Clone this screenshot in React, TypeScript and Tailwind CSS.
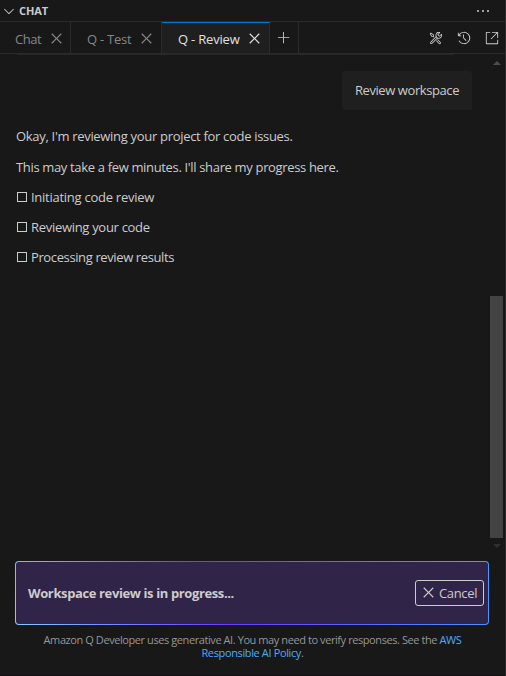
import React from "react";
import { VscAdd, VscChevronDown, VscClose, VscEllipsis, VscHistory, VscLinkExternal, VscTools } from "react-icons/vsc";

function Step({ label, tracking }: { label: string; tracking: string }) {
  return (
    <li className="flex h-[30px] items-center">
      <span className="mr-[4px] ml-[2px] h-[10px] w-[10px] shrink-0 border border-[#cccccc]" />
      <span className={tracking}>{label}</span>
    </li>
  );
}

export default function App() {
  return (
    <div className="flex h-[676px] w-[506px] flex-col overflow-hidden border-r border-[#2b2b2b] bg-[#181818] font-['Open_Sans','Noto_Sans',sans-serif] text-[13px] leading-[18px] whitespace-nowrap text-[#cccccc]">
      <header className="flex h-[22px] shrink-0 items-center border-b border-[#2b2b2b] pr-[14px] pl-[1px]">
        <VscChevronDown className="size-4" />
        <h1 className="ml-[2px] text-[11px] font-bold tracking-[-0.1px]">CHAT</h1>
        <VscEllipsis className="ml-auto size-4" />
      </header>

      <nav className="flex h-[32px] shrink-0 border-b border-[#2b2b2b] text-[#868686]">
        <div className="flex w-[71px] items-center border-r border-[#2b2b2b] pt-[3px] pl-[15px]">
          <span className="w-[32px] tracking-[-0.5px]">Chat</span>
          <VscClose className="size-[19px] -translate-y-px" />
        </div>
        <div className="flex w-[91px] items-center border-r border-[#2b2b2b] pt-[3px] pl-[16px]">
          <span className="w-[50px] tracking-[-0.25px]">Q - Test</span>
          <VscClose className="size-[19px] -translate-y-px" />
        </div>
        <div className="flex w-[108px] items-center border-t border-r border-t-[#0078d4] border-r-[#2b2b2b] bg-[#1f1f1f] pt-[2px] pl-[16px] text-[#e0e0e0]">
          <span className="w-[67px] tracking-[-0.2px]">Q - Review</span>
          <VscClose className="size-[19px] -translate-y-px" />
        </div>
        <div className="flex w-[29px] items-center justify-center border-r border-[#2b2b2b] text-[#cccccc]">
          <VscAdd className="size-[14px]" />
        </div>
        <div className="ml-auto flex items-center gap-[14px] pr-[6px] text-[#cccccc]">
          <VscTools className="size-[14px]" />
          <VscHistory className="size-[14px]" />
          <VscLinkExternal className="size-[14px]" />
        </div>
      </nav>

      <main className="flex h-[498px] shrink-0">
        <section className="min-w-0 flex-1 pl-[15px]">
          <div className="ml-[2px] h-px w-[437px] bg-[#272727]" />
          <div className="mt-[16px] ml-[327px] flex h-[39px] w-[130px] items-center justify-center rounded-[4px] rounded-br-none bg-[#1f1f1f] pb-[2px]">
            <span className="tracking-[-0.42px]">Review workspace</span>
          </div>
          <p className="mt-[17px] ml-px tracking-[-0.31px]">Okay, I'm reviewing your project for code issues.</p>
          <p className="mt-[13px] ml-px tracking-[-0.34px]">This may take a few minutes. I'll share my progress here.</p>
          <ul className="mt-[6px]">
            <Step label="Initiating code review" tracking="tracking-[-0.26px]" />
            <Step label="Reviewing your code" tracking="tracking-[-0.3px]" />
            <Step label="Processing review results" tracking="tracking-[-0.38px]" />
          </ul>
        </section>
        <div className="flex w-[17px] shrink-0 flex-col items-center pt-[7px]">
          <svg className="h-[4px] w-[8px] text-[#4c4c4c]" viewBox="0 0 8 4" fill="currentColor"><path d="M4 0 8 4H0Z" /></svg>
          <div className="mt-[231px] h-[242px] w-[13px] bg-[#434343]" />
          <svg className="mt-[6px] h-[4px] w-[8px] text-[#303030]" viewBox="0 0 8 4" fill="currentColor"><path d="M0 0H8L4 4Z" /></svg>
        </div>
      </main>

      <section className="mt-[9px] ml-[15px] h-[64px] w-[474px] shrink-0 rounded-[4px] bg-[linear-gradient(65deg,#83ccff_0%,#6b3cff_42%,#6650ff_55%,#4a9cff_100%)] p-px">
        <div className="flex h-full items-center justify-between rounded-[3px] bg-[#312449] pr-[4px] pl-[12px]">
          <strong className="font-bold tracking-[-0.38px]">Workspace review is in progress...</strong>
          <button className="flex h-[26px] w-[69px] items-center rounded-[3px] border border-[#cccccc] pl-[3px]">
            <VscClose className="size-[19px] -translate-y-px" />
            <span className="ml-px tracking-[-0.35px]">Cancel</span>
          </button>
        </div>
      </section>

      <footer className="mt-[8px] h-[42px] shrink-0 text-center text-[11px] leading-[13px] text-[#969696]">
        <p className="tracking-[-0.42px]">Amazon Q Developer uses generative AI. You may need to verify responses. See the <a className="text-[#4daafc]">AWS</a></p>
        <p className="tracking-[-0.37px]"><a className="text-[#4daafc]">Responsible AI Policy</a>.</p>
      </footer>
      <div className="h-px shrink-0 bg-[#100c12]" />
    </div>
  );
}
